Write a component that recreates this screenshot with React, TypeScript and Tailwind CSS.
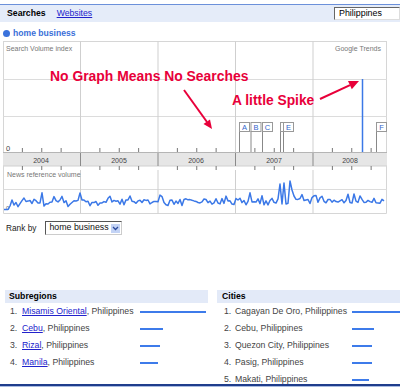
import React from 'react'

const BLUE = '#3b78e7'
const RED = '#e8003a'

const bounds = [80.5, 158, 235.5, 313]
const quarterTicks: number[] = []
for (let k = 1; k < 20; k++) {
  if (k % 4 !== 0) quarterTicks.push(3 + k * 19.375)
}

const years = [
  { label: '2004', x: 41 },
  { label: '2005', x: 119 },
  { label: '2006', x: 196 },
  { label: '2007', x: 274 },
  { label: '2008', x: 350 },
]

const markers = [
  { l: 'A', x: 239 },
  { l: 'B', x: 250.5 },
  { l: 'C', x: 262 },
  { l: '', x: 280, w: 3 },
  { l: 'E', x: 283 },
  { l: 'F', x: 376 },
]

function rng(seed: number) {
  let s = seed
  return () => {
    s = (s * 16807) % 2147483647
    return (s - 1) / 2147483646
  }
}

const newsPoints = (() => {
  const r = rng(42)
  const over: Record<number, number> = {
    24: 198, 80: 193, 82: 200, 280: 184, 282: 204, 284: 183, 286: 204,
    290: 181, 292: 190, 294: 196,
  }
  const pts: string[] = []
  for (let x = 4; x <= 385; x += 2) {
    let y: number
    if (x <= 8) y = 209.5
    else if (x === 10) y = 206
    else {
      y = 203.5 - ((x - 4) / 381) * 3 + (r() - 0.5) * 7
      if (r() < 0.15) y -= 4 + r() * 3
    }
    if (over[x] !== undefined) y = over[x]
    pts.push(`${x},${y.toFixed(1)}`)
  }
  return pts.join(' ')
})()

const Chart: React.FC = () => (
  <svg width={400} height={175} viewBox="0 40 400 175" className="block">
    {/* search volume panel */}
    <rect x={3.5} y={41.5} width={383} height={111} fill="#fff" stroke="#d6d6d6" />
    <line x1={3.5} x2={386.5} y1={79.5} y2={79.5} stroke="#dcdcdc" />
    <line x1={3.5} x2={386.5} y1={116.5} y2={116.5} stroke="#dcdcdc" />
    {bounds.map((b) => (
      <line key={b} x1={b} x2={b} y1={41.5} y2={152.5} stroke="#cfcfcf" />
    ))}
    <text x={6} y={51} fontSize={7} fill="#777">Search Volume index</text>
    <text x={335} y={51} fontSize={7} fill="#777">Google Trends</text>
    <text x={6} y={151} fontSize={7.5} fill="#444">0</text>

    {/* year band */}
    <rect x={3} y={153} width={384} height={13} fill="#e6e6e6" />
    <line x1={3} x2={387} y1={152.5} y2={152.5} stroke="#b5b5b5" />
    <line x1={3} x2={387} y1={166} y2={166} stroke="#d0d0d0" />
    {bounds.map((b) => (
      <line key={'s' + b} x1={b} x2={b} y1={153} y2={166} stroke="#8a8a8a" />
    ))}
    {quarterTicks.map((t) => (
      <g key={t}>
        <line x1={t} x2={t} y1={148} y2={152} stroke="#777" />
        <line x1={t} x2={t} y1={166} y2={170} stroke="#777" />
      </g>
    ))}
    {years.map((y) => (
      <text key={y.label} x={y.x} y={162.5} fontSize={7} fill="#444" textAnchor="middle">
        {y.label}
      </text>
    ))}

    {/* event markers */}
    {markers.map((m) => (
      <g key={m.x}>
        <line x1={m.x + 0.5} x2={m.x + 0.5} y1={131} y2={152} stroke="#888" />
        <rect x={m.x + 0.5} y={122.5} width={m.w ?? 10} height={9} fill="#fff" stroke="#999" />
        {m.l && (
          <text x={m.x + 5.5} y={130} fontSize={7.5} fill="#3366cc" textAnchor="middle">
            {m.l}
          </text>
        )}
      </g>
    ))}

    {/* spike */}
    <line x1={362.5} x2={362.5} y1={79} y2={152} stroke={BLUE} strokeWidth={1.5} />

    {/* news panel */}
    <line x1={3.5} x2={3.5} y1={166} y2={213.5} stroke="#d6d6d6" />
    <line x1={386.5} x2={386.5} y1={166} y2={213.5} stroke="#d6d6d6" />
    <line x1={3.5} x2={386.5} y1={213.5} y2={213.5} stroke="#d6d6d6" />
    <line x1={3.5} x2={386.5} y1={189.5} y2={189.5} stroke="#dcdcdc" />
    {bounds.map((b) => (
      <line key={'n' + b} x1={b} x2={b} y1={170} y2={213.5} stroke="#cfcfcf" />
    ))}
    <text x={7} y={177} fontSize={7} fill="#777">News reference volume</text>
    <text x={6} y={210} fontSize={6} fill="#666">0</text>
    <polyline points={newsPoints} fill="none" stroke={BLUE} strokeWidth={1.5} strokeLinejoin="round" />

    {/* annotations */}
    <text x={50} y={81} fontSize={13.9} fontWeight="bold" fill={RED}>
      No Graph Means No Searches
    </text>
    <line x1={184} y1={90} x2={207} y2={122} stroke={RED} strokeWidth={2} />
    <polygon points="212,129 203.5,124 210,119.4" fill={RED} />
    <text x={232} y={105} fontSize={13.8} fontWeight="bold" fill={RED}>
      A little Spike
    </text>
    <line x1={320} y1={99} x2={350} y2={85.2} stroke={RED} strokeWidth={2} />
    <polygon points="359,81 351.8,89.3 348,81.1" fill={RED} />
  </svg>
)

const Bar: React.FC<{ w: number }> = ({ w }) => (
  <div className="h-[2px] bg-[#3d7bea]" style={{ width: w }} />
)

const subregions = [
  { name: 'Misamis Oriental', w: 66 },
  { name: 'Cebu', w: 23 },
  { name: 'Rizal', w: 20 },
  { name: 'Manila', w: 18 },
]

const cities = [
  { name: 'Cagayan De Oro', w: 48 },
  { name: 'Cebu', w: 22 },
  { name: 'Quezon City', w: 20 },
  { name: 'Pasig', w: 20 },
  { name: 'Makati', w: 17 },
]

export default function App() {
  return (
    <div className="relative w-[400px] h-[387px] overflow-hidden bg-white font-['Liberation_Sans',Arial,sans-serif] text-[8.7px] text-black">
      {/* tabs bar */}
      <div className="mt-[4px] border-t border-[#6b90da] bg-[#e5ecf9] h-[18px] flex items-center">
        <span className="ml-[7px] font-bold">Searches</span>
        <span className="ml-[11px] text-[#2222cc] underline">Websites</span>
        <div className="ml-auto self-start mt-[2px] w-[66px] h-[13px] bg-white border border-t-[#666] border-l-[#666] border-r-[#ddd] border-b-[#ddd] pl-[4px] leading-[11px] text-[8.9px]">
          Philippines
        </div>
      </div>

      <div className="mt-[5px] h-[12px] flex items-center">
        <div className="ml-[3px] w-[7px] h-[7px] rounded-full bg-[#3a72dc]" />
        <span className="ml-[3px] font-bold text-[#3a6fd8] text-[8.6px]">home business</span>
      </div>

      <div className="mt-[1px]">
        <Chart />
      </div>

      <div className="mt-[6px] h-[14px] flex items-center">
        <span className="ml-[6px] text-[#222] text-[8.3px]">Rank by</span>
        <div className="ml-[9px] w-[77px] h-[14px] flex items-center border border-t-[#555] border-l-[#555] border-r-[#ccc] border-b-[#ccc] bg-white">
          <span className="ml-[3px] text-[8.8px] text-[#111]">home business</span>
          <div className="ml-auto mr-[1px] w-[9px] h-[9px] bg-[#c3d3f5] flex items-center justify-center">
            <svg width="7" height="5" viewBox="0 0 7 5">
              <path d="M1 1 L3.5 3.5 L6 1" fill="none" stroke="#2b4a9c" strokeWidth="1.3" />
            </svg>
          </div>
        </div>
      </div>

      <div className="mt-[55px] flex">
        <div className="ml-[5px] w-[203px]">
          <div className="h-[13px] bg-[#e3eaf8] pl-[4px] flex items-center font-bold">Subregions</div>
          {subregions.map((s, i) => (
            <div key={s.name} className="h-[17px] flex items-center text-[#444]">
              <span className="ml-[5px] w-[12px]">{i + 1}.</span>
              <span className="w-[118px]">
                <span className="text-[#2222cc] underline">{s.name}</span>, Philippines
              </span>
              <Bar w={s.w} />
            </div>
          ))}
        </div>
        <div className="ml-[9px] flex-1">
          <div className="h-[13px] bg-[#e3eaf8] pl-[5px] flex items-center font-bold">Cities</div>
          {cities.map((c, i) => (
            <div key={c.name} className="h-[17px] flex items-center text-[#444]">
              <span className="ml-[7px] w-[11px]">{i + 1}.</span>
              <span className="w-[117px]">{c.name}, Philippines</span>
              <Bar w={c.w} />
            </div>
          ))}
        </div>
      </div>

      <div className="absolute left-0 right-0 bottom-0">
        <div className="h-[2px] bg-[#1f3d8c]" />
        <div className="h-[1px] bg-[#a9bbe2]" />
      </div>
    </div>
  )
}
